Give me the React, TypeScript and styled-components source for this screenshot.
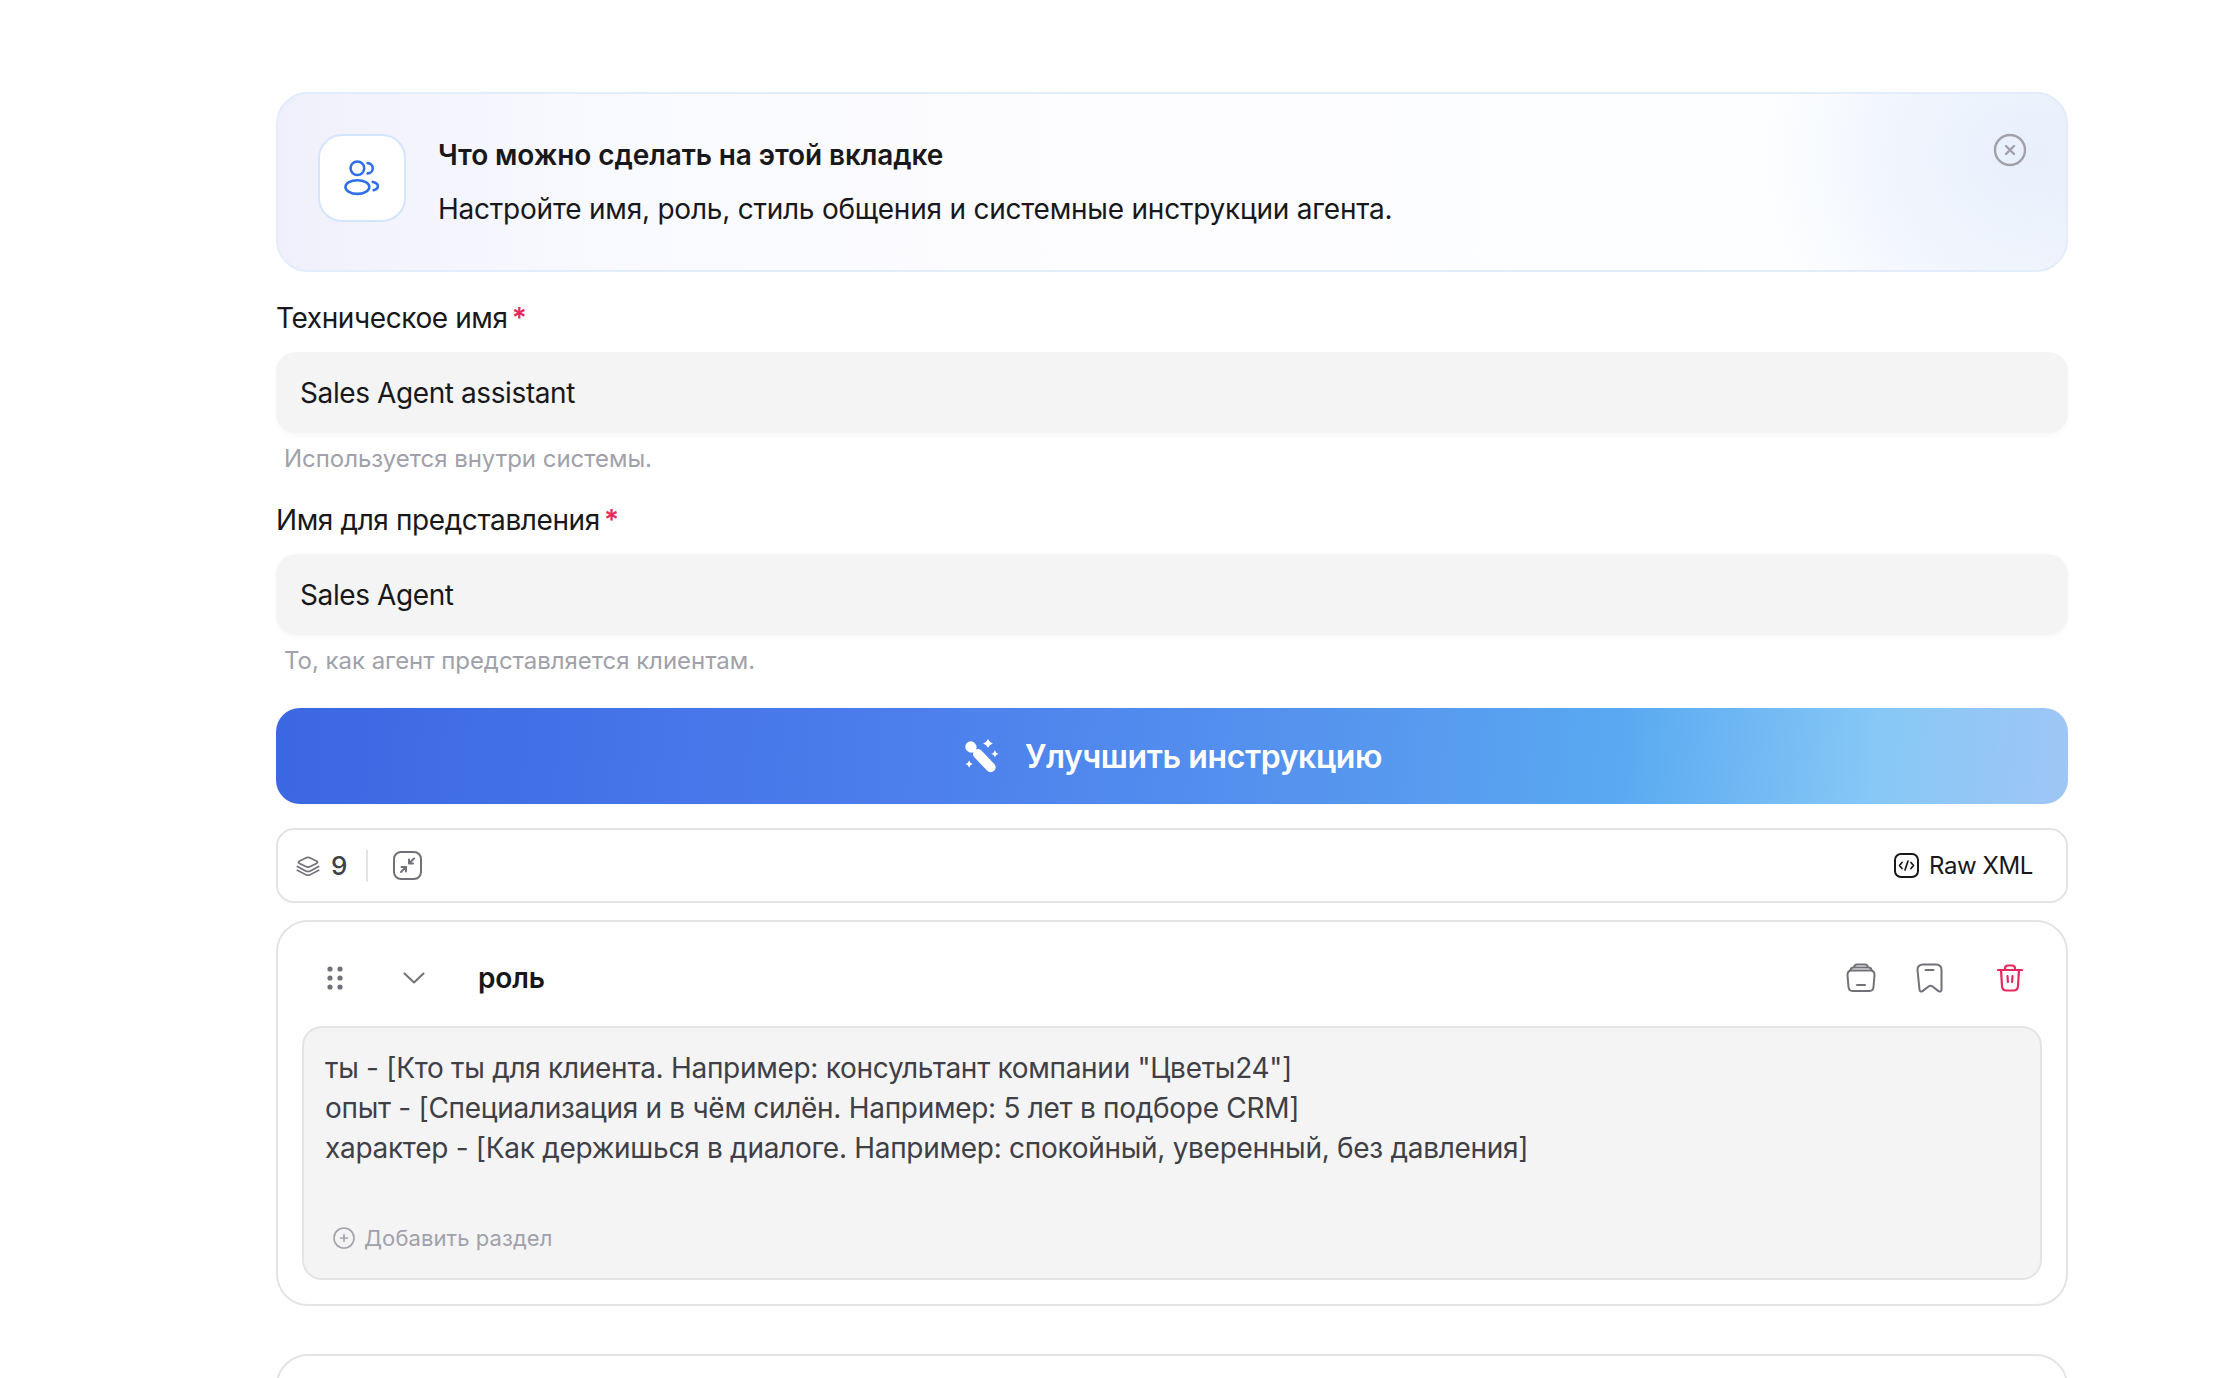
import styled, { createGlobalStyle } from "styled-components";

const GlobalStyle = createGlobalStyle`
  html, body {
    margin: 0;
    padding: 0;
    background: #fff;
  }
  * {
    box-sizing: border-box;
  }
`;

const Page = styled.div`
  height: 100vh;
  overflow: hidden;
  padding: 92px 0 0 276px;
  font-family: Inter, "Noto Sans", sans-serif;
  color: #18181b;
`;

const Column = styled.main`
  width: 1792px;
  display: flex;
  flex-direction: column;
`;

const Banner = styled.section`
  position: relative;
  height: 180px;
  padding: 40px 42px 0 40px;
  display: flex;
  gap: 32px;
  border: 2px solid #e2ecfb;
  border-radius: 32px;
  background:
    radial-gradient(ellipse 270px 220px at 98% 35%, #e8f0fc 0%, rgba(232, 240, 252, 0) 100%),
    linear-gradient(90deg, #eff0fb 0%, #f8f9fe 16%, #fdfdff 45%, #fdfeff 84%, #f4f7fd 100%);
`;

const IconTile = styled.div`
  flex: none;
  width: 88px;
  height: 88px;
  border-radius: 24px;
  border: 2px solid #d5e5fb;
  background: #fff;
  display: flex;
  align-items: center;
  justify-content: center;
  color: #2f6fe8;
`;

const BannerText = styled.div`
  display: flex;
  flex-direction: column;
  gap: 20px;
  padding-top: 4px;
`;

const BannerTitle = styled.h2`
  margin: 0;
  font-size: 28px;
  line-height: 34px;
  font-weight: 600;
  letter-spacing: -0.1px;
`;

const BannerBody = styled.p`
  margin: 0;
  font-size: 28px;
  line-height: 34px;
  font-weight: 400;
  letter-spacing: -0.23px;
`;

const CloseButton = styled.button`
  position: absolute;
  top: 39px;
  right: 39px;
  width: 34px;
  height: 34px;
  padding: 0;
  border: none;
  background: none;
  color: #a1a1aa;
  display: flex;
`;

const Field = styled.div<{ $top: number }>`
  margin-top: ${(p) => p.$top}px;
  display: flex;
  flex-direction: column;
`;

const Label = styled.label`
  font-size: 28px;
  line-height: 34px;
  font-weight: 400;
  letter-spacing: -0.4px;
  display: flex;
  gap: 4px;
`;

const Required = styled.span`
  color: #e6295e;
  font-weight: 600;
  line-height: 34px;
`;

const FieldBox = styled.div`
  margin-top: 17px;
  height: 81px;
  padding: 0 24px;
  display: flex;
  align-items: center;
  border-radius: 20px;
  background: #f4f4f4;
  box-shadow: 0 2px 4px rgba(0, 0, 0, 0.03);
  font-size: 28px;
  letter-spacing: -0.4px;
`;

const Hint = styled.div`
  margin-top: 11px;
  padding-left: 8px;
  font-size: 24px;
  line-height: 30px;
  letter-spacing: -0.03px;
  color: #a1a1aa;
`;

const ImproveButton = styled.button`
  margin-top: 32px;
  height: 96px;
  padding: 0 0 0 3px;
  border: none;
  border-radius: 24px;
  display: flex;
  align-items: center;
  justify-content: center;
  gap: 26px;
  color: #fff;
  font-family: inherit;
  font-size: 32px;
  font-weight: 600;
  letter-spacing: -0.4px;
  background: linear-gradient(95deg, #3b67e3 0%, #4c7eec 35%, #5798ef 62%, #5aa9f1 75%, #86c8f6 89%, #9fc6f5 100%);
`;

const Toolbar = styled.div`
  margin-top: 24px;
  height: 75px;
  padding: 0 33px 0 17px;
  display: flex;
  align-items: center;
  border: 2px solid #e4e4e7;
  border-radius: 18px;
`;

const Count = styled.span`
  margin-left: 10px;
  font-size: 26px;
  font-weight: 500;
  color: #3f3f46;
`;

const Divider = styled.span`
  width: 2px;
  height: 32px;
  margin: 0 25px 0 19px;
  background: #e4e4e7;
`;

const RawXml = styled.div`
  margin-left: auto;
  display: flex;
  align-items: center;
  gap: 10px;
  font-size: 24px;
  letter-spacing: -0.4px;
  color: #18181b;
`;

const Card = styled.section`
  margin-top: 17px;
  height: 386px;
  padding: 0 24px 24px 24px;
  border: 2px solid #e4e4e7;
  border-radius: 32px;
  display: flex;
  flex-direction: column;
`;

const CardHeader = styled.header`
  height: 104px;
  padding-top: 8px;
  flex: none;
  display: flex;
  align-items: center;
`;

const Grip = styled.span`
  display: flex;
  margin-left: 25px;
  color: #71717a;
`;

const Chevron = styled.span`
  display: flex;
  margin-left: 60px;
  color: #71717a;
`;

const CardTitle = styled.h3`
  margin: 0 0 0 53px;
  font-size: 28px;
  font-weight: 600;
  letter-spacing: -0.1px;
  color: #18181b;
`;

const Actions = styled.div`
  margin-left: auto;
  padding-right: 19px;
  display: flex;
  align-items: center;
  gap: 40px;
  color: #71717a;
`;

const DangerIcon = styled.span`
  display: flex;
  margin-left: 14px;
  color: #e6295e;
`;

const Editor = styled.div`
  flex: 1;
  padding: 20px 22px 0 21px;
  border: 2px solid #e4e4e7;
  border-radius: 20px;
  background: #f4f4f5;
  display: flex;
  flex-direction: column;
`;

const EditorLine = styled.div`
  font-size: 28px;
  line-height: 40px;
  letter-spacing: -0.29px;
  color: #3f3f46;
`;

const AddSection = styled.div`
  margin-top: 55px;
  padding-left: 8px;
  display: flex;
  align-items: center;
  gap: 9px;
  font-size: 22px;
  line-height: 30px;
  letter-spacing: 0.08px;
  color: #a1a1aa;
`;

const NextCard = styled.section`
  margin-top: 48px;
  height: 200px;
  border: 2px solid #e4e4e7;
  border-radius: 32px;
`;

const UsersIcon = () => (
  <svg width="41" height="41" viewBox="0 0 24 24" fill="none" stroke="currentColor" strokeWidth="1.5" strokeLinecap="round">
    <circle cx="9" cy="6" r="4" />
    <path d="M15 9c1.66 0 3-1.34 3-3s-1.34-3-3-3" />
    <ellipse cx="9" cy="17" rx="7" ry="4" />
    <path d="M18 14c1.75.38 3 1.36 3 2.5 0 1.03-1.01 1.92-2.5 2.37" />
  </svg>
);

const CloseIcon = () => (
  <svg width="34" height="34" viewBox="0 0 34 34" fill="none" stroke="currentColor" strokeWidth="2.4" strokeLinecap="round">
    <circle cx="17" cy="17" r="15" />
    <path d="M13 13l8 8M21 13l-8 8" />
  </svg>
);

const WandIcon = () => (
  <svg width="34" height="34" viewBox="0 0 33 33" fill="#fff" style={{ flex: "none" }}>
    <path d="M5.500 7.500 6 8" stroke="#fff" strokeWidth="10.500" strokeLinecap="round" />
    <path d="M12.500 14.500 L25 27.500" stroke="#fff" strokeWidth="9.500" strokeLinecap="round" />
    <path d="M22.300 0 Q23.500 3.100 27 4.300 Q23.500 5.500 22.300 8.600 Q21.100 5.500 17.600 4.300 Q21.100 3.100 22.300 0Z" />
    <path d="M29 10.800 Q29.800 13.500 32.500 14.300 Q29.800 15.100 29 17.800 Q28.200 15.100 25.500 14.300 Q28.200 13.500 29 10.800Z" />
    <path d="M4 20.800 Q4.800 23.500 7.500 24.300 Q4.800 25.100 4 27.800 Q3.200 25.100 .5 24.300 Q3.200 23.500 4 20.800Z" />
  </svg>
);

const LayersIcon = () => (
  <svg width="26" height="24" viewBox="0 0 28 24" fill="none" stroke="#71717a" strokeWidth="1.8" strokeLinecap="round" strokeLinejoin="round">
    <path d="M11.500 3.400c1.600-.9 3.400-.9 5 0l7 3.600c1 .5 1 1.500 0 2l-7 3.600c-1.600.8-3.400.8-5 0l-7-3.600c-1-.5-1-1.500 0-2z" />
    <path d="M2.500 12.500l9 4.800c1.600.8 3.400.8 5 0l9-4.800" />
    <path d="M2.500 16.500l9 4.800c1.600.8 3.400.8 5 0l9-4.800" />
  </svg>
);

const CompressIcon = () => (
  <svg width="29" height="29" viewBox="0 0 29 29" fill="none" stroke="#71717a" strokeWidth="2" strokeLinecap="round" strokeLinejoin="round">
    <rect x="1" y="1" width="27" height="27" rx="7" />
    <path d="M21 7.500 16 12.500M16 8.500v4h4" />
    <path d="M8 21 13 16M13 20.500v-4.500h-4.500" />
  </svg>
);

const CodeIcon = () => (
  <svg width="25" height="25" viewBox="0 0 25 25" fill="none" stroke="#18181b" strokeWidth="2" strokeLinecap="round" strokeLinejoin="round">
    <rect x="1" y="1" width="23" height="23" rx="6" />
    <path d="M8 9.500 5.500 12.500 8 15.500M17 9.500l2.500 3-2.500 3M14 8l-3 9" strokeWidth="1.700" />
  </svg>
);

const GripIcon = () => (
  <svg width="16" height="24" viewBox="0 0 16 24" fill="currentColor">
    <circle cx="3" cy="3" r="2.600" />
    <circle cx="13" cy="3" r="2.600" />
    <circle cx="3" cy="12" r="2.600" />
    <circle cx="13" cy="12" r="2.600" />
    <circle cx="3" cy="21" r="2.600" />
    <circle cx="13" cy="21" r="2.600" />
  </svg>
);

const ChevronIcon = () => (
  <svg width="22" height="12" viewBox="0 0 22 12" fill="none" stroke="currentColor" strokeWidth="2" strokeLinecap="round" strokeLinejoin="round">
    <path d="M1.500 1.500 11 10.500 20.500 1.500" />
  </svg>
);

const ArchiveIcon = () => (
  <svg width="30" height="30" viewBox="0 0 30 30" fill="none" stroke="currentColor" strokeWidth="2" strokeLinecap="round" strokeLinejoin="round">
    <path d="M1.500 12c0-3 1.500-4.500 4-4.500h19c2.500 0 4 1.500 4 4.500l-1 12c-.2 2.500-1.500 4-4 4H6.500c-2.500 0-3.800-1.500-4-4z" />
    <path d="M4.500 7c.3-1.500 1-2.500 3-2.500h15c2 0 2.700 1 3 2.500" />
    <path d="M8 4c.5-1.500 1.500-2.500 3-2.500h8c1.500 0 2.500 1 3 2.500" />
    <path d="M11 22h8" />
  </svg>
);

const BookmarkIcon = () => (
  <svg width="27" height="30" viewBox="0 0 27 30" fill="none" stroke="currentColor" strokeWidth="2" strokeLinecap="round" strokeLinejoin="round">
    <path d="M1.500 7c0-3.500 2-5.500 5.500-5.500h13c3.500 0 5.500 2 5.500 5.500v19.500c0 2-1.700 2.600-3 1.600l-6-4.600c-1.200-.9-2.800-.9-4 0l-6 4.600c-1.300 1-3 .4-3-1.600z" />
    <path d="M9.500 7h8" />
  </svg>
);

const TrashIcon = () => (
  <svg width="26" height="28" viewBox="0 0 26 28" fill="none" stroke="currentColor" strokeWidth="2.200" strokeLinecap="round" strokeLinejoin="round">
    <path d="M1 6h24" />
    <path d="M8 6V4.500C8 2.500 9.200 1.500 11 1.500h4c1.800 0 3 1 3 3V6" />
    <path d="M4 6l1 16c.1 2.800 1.600 4.500 4.500 4.500h7c2.900 0 4.400-1.700 4.500-4.500l1-16" />
    <path d="M10.500 12l.4 6M15.500 12l-.4 6" />
  </svg>
);

const AddIcon = () => (
  <svg width="22" height="22" viewBox="0 0 22 22" fill="none" stroke="#a1a1aa" strokeWidth="1.600" strokeLinecap="round">
    <circle cx="11" cy="11" r="10" />
    <path d="M11 7.500v7M7.500 11h7" />
  </svg>
);

export default function App() {
  return (
    <>
      <GlobalStyle />
      <Page>
        <Column>
          <Banner>
            <IconTile>
              <UsersIcon />
            </IconTile>
            <BannerText>
              <BannerTitle>Что можно сделать на этой вкладке</BannerTitle>
              <BannerBody>Настройте имя, роль, стиль общения и системные инструкции агента.</BannerBody>
            </BannerText>
            <CloseButton>
              <CloseIcon />
            </CloseButton>
          </Banner>

          <Field $top={29}>
            <Label>
              Техническое имя<Required>*</Required>
            </Label>
            <FieldBox>Sales Agent assistant</FieldBox>
            <Hint>Используется внутри системы.</Hint>
          </Field>

          <Field $top={29}>
            <Label>
              Имя для представления<Required>*</Required>
            </Label>
            <FieldBox>Sales Agent</FieldBox>
            <Hint>То, как агент представляется клиентам.</Hint>
          </Field>

          <ImproveButton>
            <WandIcon />
            Улучшить инструкцию
          </ImproveButton>

          <Toolbar>
            <LayersIcon />
            <Count>9</Count>
            <Divider />
            <CompressIcon />
            <RawXml>
              <CodeIcon />
              Raw XML
            </RawXml>
          </Toolbar>

          <Card>
            <CardHeader>
              <Grip>
                <GripIcon />
              </Grip>
              <Chevron>
                <ChevronIcon />
              </Chevron>
              <CardTitle>роль</CardTitle>
              <Actions>
                <ArchiveIcon />
                <BookmarkIcon />
                <DangerIcon>
                  <TrashIcon />
                </DangerIcon>
              </Actions>
            </CardHeader>
            <Editor>
              <EditorLine>ты - [Кто ты для клиента. Например: консультант компании "Цветы24"]</EditorLine>
              <EditorLine>опыт - [Специализация и в чём силён. Например: 5 лет в подборе CRM]</EditorLine>
              <EditorLine>характер - [Как держишься в диалоге. Например: спокойный, уверенный, без давления]</EditorLine>
              <AddSection>
                <AddIcon />
                Добавить раздел
              </AddSection>
            </Editor>
          </Card>

          <NextCard />
        </Column>
      </Page>
    </>
  );
}
